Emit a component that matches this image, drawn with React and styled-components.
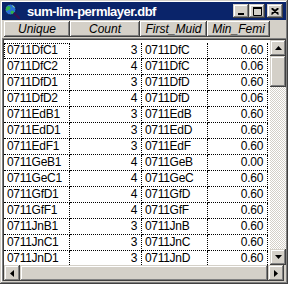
import React from "react";
import styled, { createGlobalStyle, css } from "styled-components";

const rows = [
  ["0711DfC1", 3, "0711DfC", "0.60"],
  ["0711DfC2", 4, "0711DfC", "0.06"],
  ["0711DfD1", 3, "0711DfD", "0.60"],
  ["0711DfD2", 4, "0711DfD", "0.06"],
  ["0711EdB1", 3, "0711EdB", "0.60"],
  ["0711EdD1", 3, "0711EdD", "0.60"],
  ["0711EdF1", 3, "0711EdF", "0.60"],
  ["0711GeB1", 4, "0711GeB", "0.00"],
  ["0711GeC1", 4, "0711GeC", "0.60"],
  ["0711GfD1", 4, "0711GfD", "0.60"],
  ["0711GfF1", 4, "0711GfF", "0.60"],
  ["0711JnB1", 3, "0711JnB", "0.60"],
  ["0711JnC1", 3, "0711JnC", "0.60"],
  ["0711JnD1", 3, "0711JnD", "0.60"],
];

const headers = [
  { label: "Unique", width: 66 },
  { label: "Count", width: 70 },
  { label: "First_Muid", width: 67 },
  { label: "Min_Femi", width: 63 },
];

const cols = [
  { width: 66, align: "left" },
  { width: 72, align: "right" },
  { width: 66, align: "left" },
  { width: 60, align: "right" },
];

const raised = css`
  background-color: #d4d0c8;
  box-shadow: inset -1px -1px #404040, inset 1px 1px #d4d0c8,
    inset -2px -2px #808080, inset 2px 2px #ffffff;
`;

function App() {
  return (
    <>
      <GlobalStyle />
      <Window>
        <TitleBar>
          <AppIcon />
          <Title>sum-lim-permlayer.dbf</Title>
          <TitleButtons>
            <TitleButton>
              <svg width="8" height="7" viewBox="0 0 8 7">
                <rect x="1" y="5" width="6" height="2" fill="#000" />
              </svg>
            </TitleButton>
            <TitleButton>
              <svg width="9" height="9" viewBox="0 0 9 9">
                <path d="M0.5 1.5H8.5V8.5H0.5Z" fill="none" stroke="#000" />
                <rect x="0" y="0" width="9" height="2" fill="#000" />
              </svg>
            </TitleButton>
            <TitleButton $gap>
              <svg width="8" height="7" viewBox="0 0 8 7">
                <path d="M0.5 0.5L7.5 6.5M1.5 0.5L7.5 5.5M7.5 0.5L0.5 6.5M6.5 0.5L0.5 5.5" stroke="#000" strokeWidth="1.2" />
              </svg>
            </TitleButton>
          </TitleButtons>
        </TitleBar>

        <HeaderRow>
          {headers.map((h) => (
            <HeaderCell key={h.label} $width={h.width}>
              {h.label}
            </HeaderCell>
          ))}
        </HeaderRow>

        <Grid>
          <GridBody>
            <Table>
              {rows.map((r, i) => (
                <Row key={r[0]}>
                  {r.map((v, j) => (
                    <Cell
                      key={j}
                      $width={cols[j].width}
                      $align={cols[j].align}
                      $focus={i === 0 && j === 0}
                    >
                      {v}
                    </Cell>
                  ))}
                </Row>
              ))}
            </Table>
            <VScroll>
              <ScrollBtn>
                <svg width="7" height="4" viewBox="0 0 7 4">
                  <path d="M3.5 0L7 4H0Z" fill="#000" />
                </svg>
              </ScrollBtn>
              <VThumb />
              <Track />
              <ScrollBtn>
                <svg width="7" height="4" viewBox="0 0 7 4">
                  <path d="M0 0H7L3.5 4Z" fill="#000" />
                </svg>
              </ScrollBtn>
            </VScroll>
          </GridBody>
          <HScroll>
            <ScrollBtn>
              <svg width="4" height="7" viewBox="0 0 4 7">
                <path d="M4 0V7L0 3.5Z" fill="#000" />
              </svg>
            </ScrollBtn>
            <HThumb />
            <ScrollBtn>
              <svg width="4" height="7" viewBox="0 0 4 7">
                <path d="M0 0L4 3.5L0 7Z" fill="#000" />
              </svg>
            </ScrollBtn>
          </HScroll>
        </Grid>
      </Window>
    </>
  );
}

function AppIcon() {
  return (
    <IconBox>
      <svg width="16" height="16" viewBox="0 0 16 16">
        <circle cx="6.5" cy="6.5" r="5.5" fill="#2a6fd6" />
        <path d="M3 3.5c1.5-1 3-0.5 3.5 1s-1 2-2 2.5S3 8.5 2 7.5C1.3 6 2 4.5 3 3.5Z" fill="#2fb24a" />
        <path d="M7 8c1-0.5 2.5-0.5 3 0.5s-0.5 2.5-2 2.5S6 9 7 8Z" fill="#2fb24a" />
        <path d="M8 2.2c1.2 0.2 2.5 1 3 2.2-1 0.3-2-0.2-3-2.2Z" fill="#8fe08a" />
        <circle cx="6.5" cy="6.5" r="5.5" fill="none" stroke="#0b1a4a" strokeWidth="1" />
        <path d="M10.5 10.5L15 15" stroke="#3a1050" strokeWidth="2.4" strokeLinecap="round" />
      </svg>
    </IconBox>
  );
}

export default App;

const GlobalStyle = createGlobalStyle`
  body {
    margin: 0;
    background: #d4d0c8;
    font-family: "Liberation Sans", Arial, sans-serif;
  }
`;

const Window = styled.div`
  width: 288px;
  height: 284px;
  box-sizing: border-box;
  padding: 2px 2px 3px 2px;
  background: #d4d0c8;
  display: flex;
  flex-direction: column;
  box-shadow: inset -1px -1px #404040, inset 1px 1px #d4d0c8,
    inset -2px -2px #808080, inset 2px 2px #ffffff;
  overflow: hidden;
`;

const TitleBar = styled.div`
  height: 18px;
  flex: none;
  background: #0a246a;
  display: flex;
  align-items: center;
  padding-left: 2px;
`;

const IconBox = styled.div`
  width: 16px;
  height: 16px;
  flex: none;
  display: flex;
`;

const Title = styled.div`
  margin-left: 7px;
  color: #ffffff;
  font-weight: bold;
  font-size: 13px;
  letter-spacing: -0.5px;
  white-space: nowrap;
`;

const TitleButtons = styled.div`
  margin-left: auto;
  display: flex;
  align-items: center;
  padding-right: 3px;
`;

const TitleButton = styled.div`
  width: 16px;
  height: 14px;
  flex: none;
  margin-left: ${(p) => (p.$gap ? "2px" : "0")};
  display: flex;
  align-items: center;
  justify-content: center;
  ${raised}
`;

const HeaderRow = styled.div`
  height: 16px;
  margin-top: 1px;
  padding-left: 2px;
  display: flex;
  flex: none;
`;

const HeaderCell = styled.div`
  width: ${(p) => p.$width}px;
  flex: none;
  box-sizing: border-box;
  display: flex;
  align-items: center;
  justify-content: center;
  font-size: 12px;
  font-style: italic;
  color: #000;
  white-space: nowrap;
  overflow: hidden;
  box-shadow: inset -1px -1px #404040, inset 1px 1px #ffffff,
    inset -2px -2px #808080;
`;

const Grid = styled.div`
  margin-top: 1px;
  flex: 1;
  min-height: 0;
  display: grid;
  grid-template-rows: 1fr 16px;
  border-top: 1px solid #808080;
  border-left: 1px solid #808080;
  box-shadow: inset 1px 1px #404040;
  padding: 1px 0 0 1px;
`;

const GridBody = styled.div`
  min-height: 0;
  display: grid;
  grid-template-columns: 266px 16px;
  background: #ffffff;
  overflow: hidden;
`;

const Table = styled.div`
  padding-top: 3px;
  overflow: hidden;
`;

const Row = styled.div`
  display: flex;
`;

const Cell = styled.div`
  width: ${(p) => p.$width}px;
  flex: none;
  box-sizing: border-box;
  height: 16px;
  line-height: 15px;
  font-size: 12px;
  letter-spacing: -0.3px;
  color: #000;
  text-align: ${(p) => p.$align};
  padding: 0 4px 0 3px;
  border-right: 1px dotted #000;
  border-bottom: 1px dotted #000;
  white-space: nowrap;
  outline: ${(p) => (p.$focus ? "1px dotted #000" : "none")};
  outline-offset: -1px;
`;

const VScroll = styled.div`
  display: grid;
  grid-template-rows: 16px 31px 1fr 16px;
  min-height: 0;
`;

const ScrollBtn = styled.div`
  width: 16px;
  height: 16px;
  box-sizing: border-box;
  display: flex;
  align-items: center;
  justify-content: center;
  ${raised}
`;

const VThumb = styled.div`
  ${raised}
`;

const Track = styled.div`
  background-color: #ffffff;
  background-image: repeating-conic-gradient(#d4d0c8 0 25%, #ffffff 0 50%);
  background-size: 2px 2px;
`;

const HScroll = styled.div`
  display: grid;
  grid-template-columns: 16px 1fr 16px;
  margin-right: 2px;
`;

const HThumb = styled.div`
  ${raised}
`;
